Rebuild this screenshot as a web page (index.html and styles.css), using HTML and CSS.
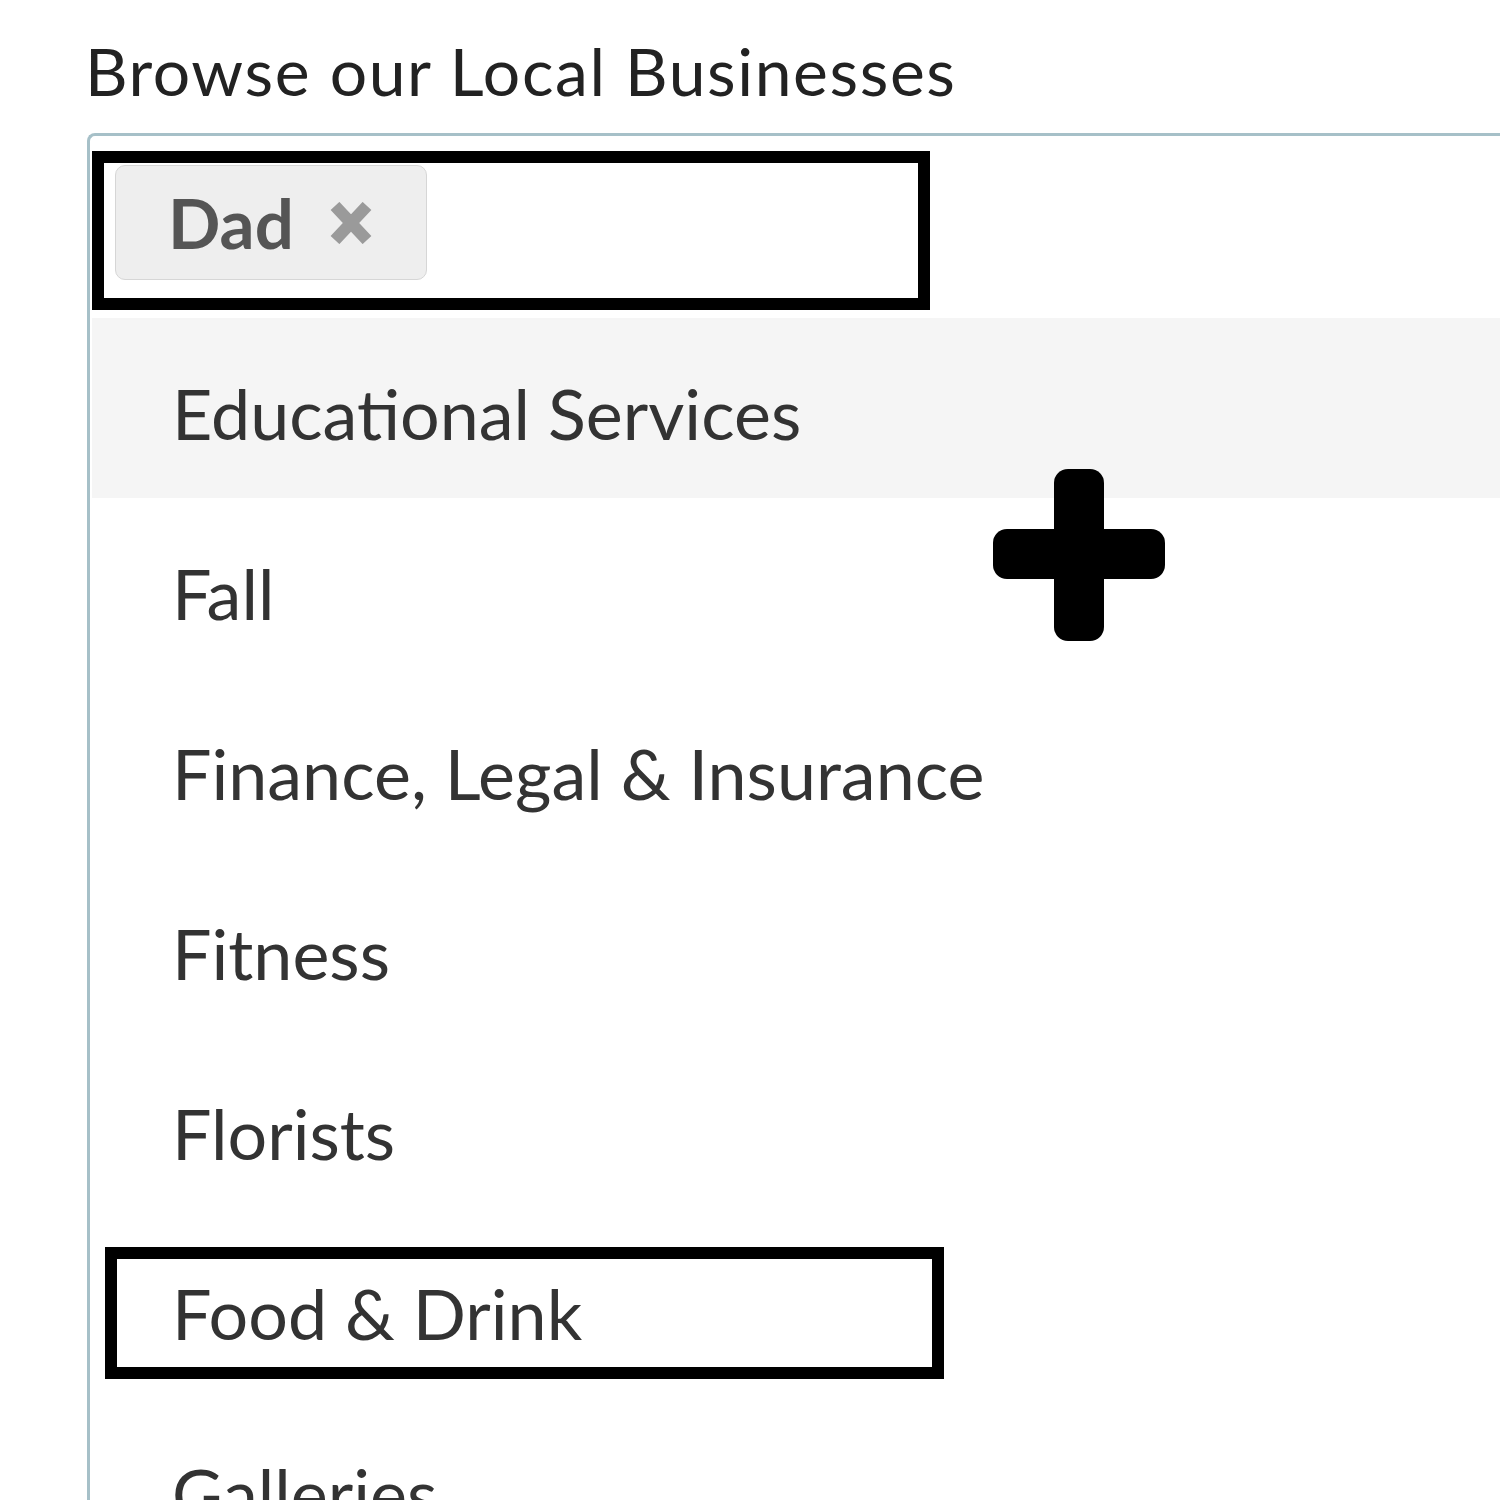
FILE: index.html
```html
<!DOCTYPE html>
<html lang="en">
<head>
  <meta charset="UTF-8" />
  <meta name="viewport" content="width=device-width, initial-scale=1.0"/>
  <title>Browse our Local Businesses</title>
  <link rel="stylesheet" href="styles.css">
</head>
<body>

  <div class="page">
    <h2 class="title">Browse our Local Businesses</h2>

    <div class="select">
      <div class="choices">
        <span class="tag">Dad
          <svg class="tag-close" width="46" height="42" viewBox="0 0 46 42">
            <path d="M7 4 L39 38 M39 4 L7 38" stroke="#9a9a9a" stroke-width="12" fill="none"/>
          </svg>
        </span>
      </div>

      <ul class="options">
        <li class="active">Educational Services</li>
        <li>Fall</li>
        <li>Finance, Legal &amp; Insurance</li>
        <li>Fitness</li>
        <li>Florists</li>
        <li class="marked"><span class="mark-box"></span>Food &amp; Drink</li>
        <li>Galleries</li>
      </ul>
    </div>

    <!-- plus marker drawn over the list -->
    <svg class="plus" width="172" height="172" viewBox="0 0 172 172">
      <rect x="61" y="0" width="50" height="172" rx="14" fill="#000"/>
      <rect x="0" y="60" width="172" height="50" rx="14" fill="#000"/>
    </svg>
  </div>

</body>
</html>
```

FILE: styles.css
```css
body {
  margin: 0;
  background: #fff;
  font-family: Lato, "Open Sans", sans-serif;
  overflow: hidden;
}
.page {
  position: relative;
  padding: 38px 0 0 85px;
  height: 1462px;
}
.title {
  margin: 0 0 29px 0;
  font-size: 66px;
  font-weight: normal;
  letter-spacing: 1.6px;
  line-height: 1;
  color: #222;
}
.select {
  width: 1600px;
  margin-left: 2px;
  border: 3px solid #a6c0c8;
  border-right: none;
  border-bottom: none;
  border-top-left-radius: 8px;
  padding-top: 15px;
}
.choices {
  width: 803px;
  height: 133px;
  margin-left: 2px;
  border: 12px solid #000;
  padding: 2px 0 0 11px;
}
.tag {
  display: inline-flex;
  align-items: center;
  gap: 34px;
  height: 113px;
  padding: 0 52px 0 52px;
  background: #eee;
  border: 1px solid #d6d6d6;
  border-radius: 10px;
  font-size: 69px;
  font-weight: bold;
  color: #555;
}
.options {
  list-style: none;
  margin: 8px 0 0 0;
  padding: 0;
}
.options li {
  height: 170px;
  line-height: 170px;
  padding: 10px 0 0 80px;
  margin-left: 2px;
  font-size: 70px;
  color: #333;
  position: relative;
}
.options li.active {
  background: #f5f5f5;
}
.mark-box {
  position: absolute;
  left: 13px;
  top: 29px;
  width: 815px;
  height: 108px;
  border: 12px solid #000;
}
.plus {
  position: absolute;
  left: 993px;
  top: 469px;
}
```
